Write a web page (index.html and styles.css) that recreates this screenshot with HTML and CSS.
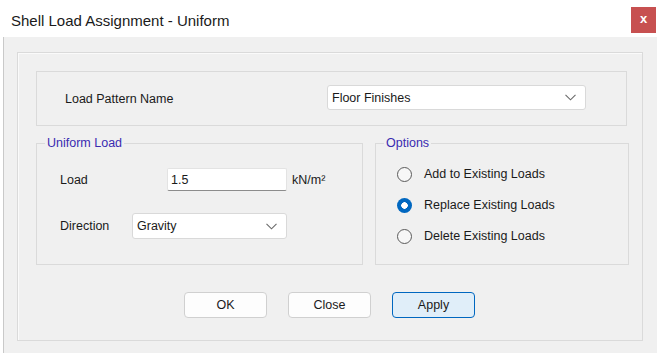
FILE: index.html
```html
<!DOCTYPE html>
<html lang="en">
<head>
  <meta charset="UTF-8" />
  <meta name="viewport" content="width=device-width, initial-scale=1.0" />
  <title>Shell Load Assignment - Uniform</title>
  <link rel="stylesheet" href="styles.css">
</head>
<body>
  <div class="titlebar">
    <span class="title">Shell Load Assignment - Uniform</span>
    <button class="close-btn">x</button>
  </div>

  <div class="window-body">
    <div class="frame">
      <div class="pattern-panel">
        <span class="pattern-label">Load Pattern Name</span>
        <div class="select pattern-select">
          <span>Floor Finishes</span>
          <svg class="chevron" width="11" height="7" viewBox="0 0 11 7"><path d="M0.5 0.8 L5.5 5.8 L10.5 0.8" fill="none" stroke="#6a6a6a" stroke-width="1.1"/></svg>
        </div>
      </div>

      <div class="groups">
        <fieldset class="group uniform">
          <legend>Uniform Load</legend>
          <div class="group-body">
            <div class="row load-row">
              <span class="row-label">Load</span>
              <div class="textbox">1.5</div>
              <span class="unit">kN/m²</span>
            </div>
            <div class="row dir-row">
              <span class="row-label dir-label">Direction</span>
              <div class="select dir-select">
                <span>Gravity</span>
                <svg class="chevron" width="11" height="7" viewBox="0 0 11 7"><path d="M0.5 0.8 L5.5 5.8 L10.5 0.8" fill="none" stroke="#6a6a6a" stroke-width="1.1"/></svg>
              </div>
            </div>
          </div>
        </fieldset>

        <fieldset class="group options">
          <legend>Options</legend>
          <div class="group-body">
            <div class="radio-row">
              <span class="radio"></span>
              <span>Add to Existing Loads</span>
            </div>
            <div class="radio-row">
              <span class="radio checked"></span>
              <span>Replace Existing Loads</span>
            </div>
            <div class="radio-row">
              <span class="radio"></span>
              <span>Delete Existing Loads</span>
            </div>
          </div>
        </fieldset>
      </div>

      <div class="buttons">
        <button class="btn">OK</button>
        <button class="btn">Close</button>
        <button class="btn btn-default">Apply</button>
      </div>
    </div>
  </div>
</body>
</html>
```

FILE: styles.css
```css
:root {
  --face: #f0f0f0;
  --line: #dadada;
  --text: #1a1a1a;
  --legend: #3a2bb0;
  --accent: #0067c0;
}

body {
  margin: 0;
  padding: 0;
  font-family: "Liberation Sans", Arial, sans-serif;
  font-size: 12.5px;
  color: var(--text);
  background: #ffffff;
  width: 657px;
  height: 353px;
  overflow: hidden;
}

.titlebar {
  height: 37px;
  display: flex;
  justify-content: space-between;
  background: #ffffff;
}

.title {
  font-size: 15px;
  padding: 12px 0 0 11px;
  line-height: 17px;
}

.close-btn {
  width: 25px;
  height: 26px;
  margin: 7px 1px 0 0;
  border: none;
  padding: 0 0 3px;
  background: #c75050;
  color: #ffffff;
  font-family: "Liberation Sans", Arial, sans-serif;
  font-size: 13px;
  font-weight: bold;
}

.window-body {
  margin-left: 3px;
  border-left: 1px solid #c9c9c9;
  background: var(--face);
  height: 316px;
  padding: 15px 0 0 13px;
  box-sizing: border-box;
}

.frame {
  width: 626px;
  height: 289px;
  box-sizing: border-box;
  border: 1px solid var(--line);
  box-shadow: inset 1px 1px 0 #fafafa;
  padding: 18px 0 0 18px;
}

.pattern-panel {
  width: 591px;
  height: 55px;
  box-sizing: border-box;
  border: 1px solid var(--line);
  display: flex;
  align-items: center;
  padding-left: 28px;
}

.pattern-label {
  width: 262px;
}

.select {
  background: #ffffff;
  border: 1px solid #d9d9d9;
  border-radius: 3px;
  box-sizing: border-box;
  display: flex;
  align-items: center;
  justify-content: space-between;
  padding: 0 9px 0 4px;
}

.pattern-select {
  width: 259px;
  height: 25px;
  margin-top: -2px;
}

.groups {
  display: flex;
  gap: 12px;
  margin-top: 9px;
}

.group {
  margin: 0;
  height: 130px;
  border: 1px solid var(--line);
  padding: 0;
  box-sizing: border-box;
}

.group legend {
  color: var(--legend);
  margin-left: 8px;
  padding: 0 2px;
  line-height: 16px;
}

.uniform {
  width: 327px;
}

.uniform .group-body {
  padding: 17px 0 0 23px;
}

.row {
  display: flex;
  align-items: center;
}

.row-label {
  width: 107px;
}

.dir-label {
  width: 72px;
}

.textbox {
  width: 120px;
  height: 23px;
  box-sizing: border-box;
  background: #ffffff;
  border: 1px solid #e3e3e3;
  border-bottom-color: #8c8c8c;
  border-radius: 2px;
  padding: 4px 3px;
  line-height: 14px;
}

.unit {
  margin-left: 5px;
}

.dir-row {
  margin-top: 22px;
}

.dir-select {
  width: 155px;
  height: 26px;
}

.options {
  width: 254px;
}

.options .group-body {
  padding: 13px 0 0 21px;
}

.radio-row {
  display: flex;
  align-items: center;
  height: 20px;
  gap: 12px;
  margin-bottom: 11px;
}

.radio-row:last-child {
  margin-bottom: 0;
}

.radio {
  width: 15px;
  height: 15px;
  box-sizing: border-box;
  border-radius: 50%;
  border: 1px solid #5a5a5a;
  background: #f7f7f7;
}

.radio.checked {
  border: none;
  background: radial-gradient(circle, #ffffff 0 3px, var(--accent) 3.5px);
}

.buttons {
  display: flex;
  gap: 21px;
  margin-top: 27px;
  padding-left: 148px;
}

.btn {
  width: 83px;
  height: 26px;
  background: #fdfdfd;
  border: 1px solid #d0d0d0;
  border-radius: 4px;
  font-family: "Liberation Sans", Arial, sans-serif;
  font-size: 12.5px;
  color: var(--text);
  padding: 0;
}

.btn-default {
  background: #e0eef9;
  border: 1.5px solid var(--accent);
}
```
